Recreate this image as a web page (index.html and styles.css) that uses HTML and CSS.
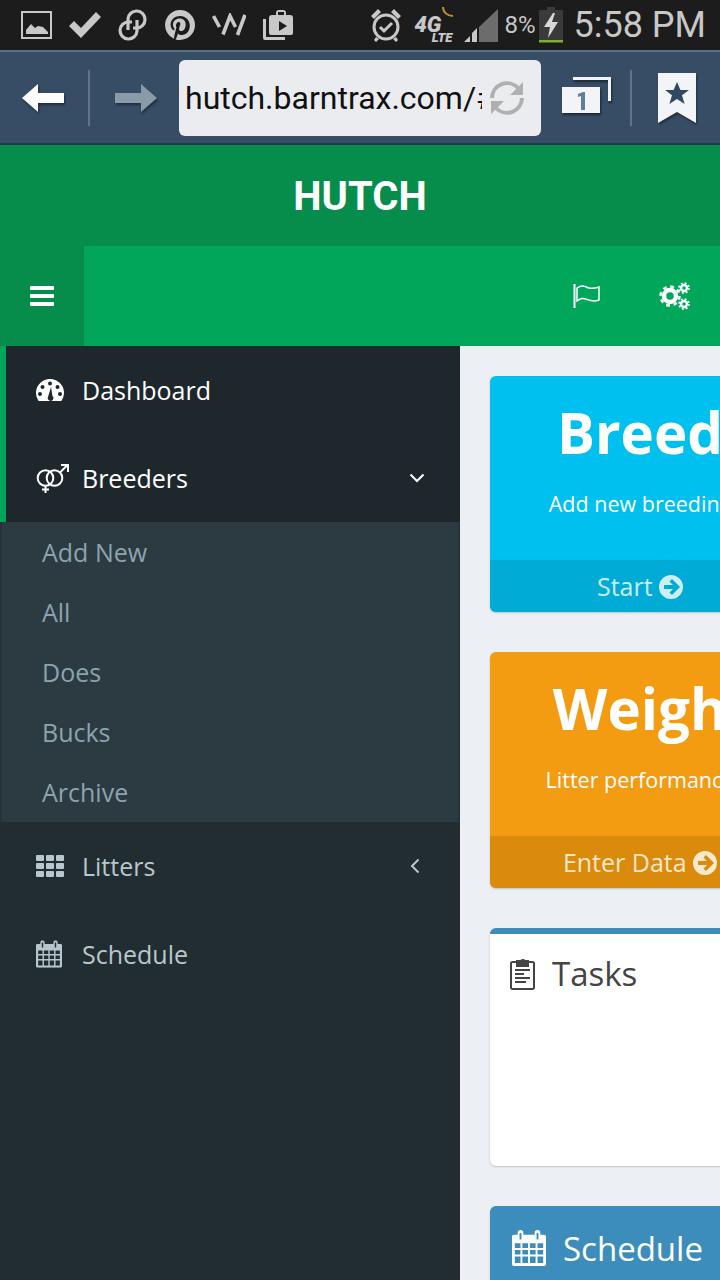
FILE: index.html
```html
<!DOCTYPE html>
<html lang="en">
<head>
    <meta charset="UTF-8">
    <meta name="viewport" content="width=device-width, initial-scale=1.0">
    <title>Hutch</title>
    <link rel="stylesheet" href="styles.css">
</head>
<body>
    <div class="status-bar">
        <div class="status-left">
            <svg class="st-icon" width="31" height="28" viewBox="0 0 31 28"><path d="M0 0h31v28H0zM2 2v24h27V2z" fill-rule="evenodd"/><path d="M5 23v-4l5-6 4 4 3-2 5 1 5 5v2z"/></svg>
            <svg class="st-icon" width="32" height="26" viewBox="0 0 32 26"><path d="M0 14l5-5 7 7L27 0l5 5-20 21z"/></svg>
            <svg class="st-icon" width="30" height="32" viewBox="0 0 30 32"><g fill="none" stroke="#c8c8c8" stroke-width="3.200"><path d="M10 21V10a8.500 8.500 0 1 1 8.500 9H15"/><path d="M19 11v11a8.500 8.500 0 1 1-8.500-9H14"/></g></svg>
            <svg class="st-icon" width="30" height="30" viewBox="0 0 30 30"><path d="M15 0a15 15 0 1 1 0 30 15 15 0 0 1-4.300-.6c1-1.700 1.700-3.600 2.200-5.800 1 1 2.400 1.500 3.900 1.500 4.700 0 8-4.200 8-9.300C24.800 10.400 20.700 6 15.200 6 9 6 5.600 10.200 5.600 14.800c0 2.300 1.200 4.700 3 5.500.6.200.7-.8.900-1.600-1-1.500-1.500-2.500-1.500-4 0-3.700 2.900-6.100 6.700-6.100 3.500 0 6 2.300 6 5.900 0 3.800-1.900 6.500-4.500 6.500-1.500 0-2.400-1.200-2.100-2.600.4-1.700 1.200-3.500 1.200-4.700 0-2.800-4.300-2.400-4.300 1.800 0 1 .4 1.900.4 1.900L9.500 25c-.4 1.200-.4 2.500-.3 3.800A15 15 0 0 1 15 0z" fill-rule="evenodd"/></svg>
            <svg class="st-icon icon-w" width="34" height="24" viewBox="0 0 34 24"><path d="M1.500 3l6 11M11 21.500L18 3l5.500 11M25.500 22L33 2" fill="none" stroke="#c8c8c8" stroke-width="3.600"/></svg>
            <svg class="st-icon" width="30" height="30" viewBox="0 0 30 30"><path d="M0 9h3v18h19v3H2a2 2 0 0 1-2-2z"/><path d="M13 5V3a3 3 0 0 1 3-3h4a3 3 0 0 1 3 3v2h4a3 3 0 0 1 3 3v15a2 2 0 0 1-2 2H8a2 2 0 0 1-2-2V8a3 3 0 0 1 3-3zm2 0h6V2h-6zm1 6v10l8-5z" fill-rule="evenodd"/></svg>
        </div>
        <div class="status-right">
            <svg class="st-icon" width="32" height="34" viewBox="0 0 32 34"><circle cx="16" cy="19" r="12" fill="none" stroke="#c8c8c8" stroke-width="3"/><path d="M10 19l4 4 8-8" fill="none" stroke="#c8c8c8" stroke-width="3"/><path d="M1 8l7-7 3 3-7 7zM31 8l-7-7-3 3 7 7zM6 29l3 2-3 3-2-2zM26 29l-3 2 3 3 2-2z"/></svg>
            <div class="net-badge">
                <svg class="net-arc" width="12" height="11" viewBox="0 0 12 11"><path d="M1 0c0 5 4 9 10 9" fill="none" stroke="#c98a2c" stroke-width="2"/></svg>
                <span class="net-4g">4G</span>
                <span class="net-lte">LTE</span>
            </div>
            <svg class="signal" width="34" height="33" viewBox="0 0 34 33"><path d="M15 33V18L34 0v33z" fill="#6c6c6c"/><path d="M0 33l6-6v6zM8 33v-9l5-5v14z" fill="#c8c8c8"/></svg>
            <span class="batt-pct">8%</span>
            <svg class="battery" width="24" height="36" viewBox="0 0 24 36"><path d="M0 3h8V0h8v3h8v30H0z" fill="#3a3a3a"/><path d="M14 6L5 20h6l-2 11 10-16h-6l3-9z" fill="#d8d8d8"/><path d="M0 33h24v2.500H0z" fill="#7fb02a"/></svg>
            <span class="clock">5:58 PM</span>
        </div>
    </div>

    <div class="browser-bar">
        <svg class="arrow arrow-back" width="42" height="28" viewBox="0 0 42 28"><path d="M0 14L16 0v9h26v10H16v9z"/></svg>
        <div class="bar-divider"></div>
        <svg class="arrow arrow-fwd" width="42" height="28" viewBox="0 0 42 28"><path d="M42 14L26 0v9H0v10h26v9z"/></svg>
        <div class="url-box">
            <span class="url-text">hutch.barntrax.com/#/</span>
            <svg class="reload" width="36" height="36" viewBox="0 0 36 36"><g fill="none" stroke="#b0b0b0" stroke-width="4"><path d="M3 18A15 15 0 0 1 29 8"/><path d="M33 18A15 15 0 0 1 7 28"/></g><path d="M34 2v13H21zM2 34V21h13z" fill="#b0b0b0"/></svg>
        </div>
        <svg class="tabs" width="52" height="44" viewBox="0 0 52 44"><path d="M13 1h38v24h-3V4H13z" fill="#f2f4f7"/><rect x="2" y="11" width="38" height="26" fill="#f2f4f7"/><path d="M18 18l5-2h2v18h-4V20l-3 1z" fill="#5f7f9c"/></svg>
        <div class="bar-divider divider-right"></div>
        <svg class="bookmark" width="38" height="50" viewBox="0 0 38 50"><path d="M0 0h38v50L19 39 0 50z" fill="#f2f4f7"/><path d="M19 9l3.400 8h8.600l-7 5.300 2.600 8.700-7.600-5-7.600 5 2.600-8.700-7-5.300h8.600z" fill="#2f4963"/></svg>
    </div>

    <header class="app-logo">HUTCH</header>

    <nav class="app-nav">
        <div class="nav-toggle">
            <div class="burger"><span></span><span></span><span></span></div>
        </div>
        <div class="nav-menu">
            <svg class="flag" width="28" height="26" viewBox="0 0 28 26"><path d="M1.500 1v24" stroke="#fff" stroke-width="2"/><path d="M4 5c6-4 8-1 12 0s7 0 10-1v13c-5 2-8 1-12-.5S8 15 4 18z" fill="none" stroke="#fff" stroke-width="1.500"/></svg>
            <svg class="gears" width="31" height="28" viewBox="0 0 31 28">
                <g fill="none" stroke="#fff">
                    <circle cx="11" cy="14" r="6" stroke-width="4.500"/>
                    <circle cx="11" cy="14" r="9.500" stroke-width="2.500" stroke-dasharray="3.700 3.760"/>
                    <circle cx="25" cy="6" r="3" stroke-width="2.400"/>
                    <circle cx="25" cy="6" r="5" stroke-width="1.600" stroke-dasharray="2 1.930"/>
                    <circle cx="25" cy="22" r="3" stroke-width="2.400"/>
                    <circle cx="25" cy="22" r="5" stroke-width="1.600" stroke-dasharray="2 1.930"/>
                </g>
            </svg>
        </div>
    </nav>

    <div class="wrapper">
        <aside class="sidebar">
            <ul class="side-menu">
                <li class="side-item active">
                    <svg class="side-icon" width="28" height="22" viewBox="0 0 28 22"><path d="M2.600 22a14 14 0 1 1 22.800 0z" fill="#fff"/><g fill="#1e282c"><circle cx="14" cy="4.500" r="2"/><circle cx="6.500" cy="8" r="2"/><circle cx="21.500" cy="8" r="2"/><circle cx="4" cy="15" r="2"/><circle cx="24" cy="15" r="2"/><path d="M15 8l1.500 9a2.800 2.800 0 1 1-4.500 1z"/></g></svg>
                    <span class="side-label">Dashboard</span>
                </li>
                <li class="side-item active">
                    <svg class="side-icon" width="33" height="30" viewBox="0 0 33 30"><g fill="none" stroke="#fff" stroke-width="2"><circle cx="9.500" cy="15" r="7.800"/><circle cx="18.500" cy="15" r="7.800"/><path d="M24 9.500L31 2.500M25 2h7v7M9.500 23v7M6 26.500h7"/></g></svg>
                    <span class="side-label">Breeders</span>
                    <svg class="chev" width="16" height="10" viewBox="0 0 16 10"><path d="M1.500 1.500L8 8l6.500-6.500" fill="none" stroke="#fff" stroke-width="2"/></svg>
                </li>
                <ul class="sub-menu">
                    <li>Add New</li>
                    <li>All</li>
                    <li>Does</li>
                    <li>Bucks</li>
                    <li>Archive</li>
                </ul>
                <li class="side-item">
                    <svg class="side-icon" width="28" height="22" viewBox="0 0 28 22"><g fill="#b8c7ce"><rect width="8" height="6" rx="1"/><rect x="10" width="8" height="6" rx="1"/><rect x="20" width="8" height="6" rx="1"/><rect y="8" width="8" height="6" rx="1"/><rect x="10" y="8" width="8" height="6" rx="1"/><rect x="20" y="8" width="8" height="6" rx="1"/><rect y="16" width="8" height="6" rx="1"/><rect x="10" y="16" width="8" height="6" rx="1"/><rect x="20" y="16" width="8" height="6" rx="1"/></g></svg>
                    <span class="side-label">Litters</span>
                    <svg class="chev chev-left" width="10" height="16" viewBox="0 0 10 16"><path d="M8.500 1.500L2 8l6.500 6.500" fill="none" stroke="#b8c7ce" stroke-width="2"/></svg>
                </li>
                <li class="side-item">
                    <svg class="side-icon" width="26" height="28" viewBox="0 0 36 38"><use href="#cal"/></svg>
                    <span class="side-label">Schedule</span>
                </li>
            </ul>
        </aside>

        <main class="content">
            <section class="tile tile-blue">
                <div class="tile-body">
                    <h3>Breed</h3>
                    <p>Add new breeding</p>
                </div>
                <div class="tile-foot">Start <svg class="go" width="24" height="24" viewBox="0 0 24 24"><use href="#go"/></svg></div>
            </section>
            <section class="tile tile-orange">
                <div class="tile-body">
                    <h3>Weigh</h3>
                    <p>Litter performance</p>
                </div>
                <div class="tile-foot">Enter Data <svg class="go" width="24" height="24" viewBox="0 0 24 24"><use href="#go"/></svg></div>
            </section>
            <section class="box">
                <div class="box-head">
                    <svg class="box-icon" width="25" height="32" viewBox="0 0 25 32"><path d="M8 4h2.500a2.500 2.500 0 0 1 4.500-1V4h2M8 4H2.500A1.500 1.500 0 0 0 1 5.500v24A1.500 1.500 0 0 0 2.500 31h20a1.500 1.500 0 0 0 1.500-1.500v-24A1.500 1.500 0 0 0 22.500 4H17" fill="none" stroke="#444" stroke-width="2"/><path d="M7 3h11v5H7zM5 12h15M5 16h9M5 20h15M5 24h11" fill="#444" stroke="#444" stroke-width="2"/></svg>
                    <span>Tasks</span>
                </div>
            </section>
            <section class="box-solid">
                <svg class="box-icon" width="34" height="36" viewBox="0 0 36 38"><use href="#cal"/></svg>
                <span>Schedule</span>
            </section>
        </main>
    </div>

    <svg class="defs" width="0" height="0">
        <symbol id="cal" viewBox="0 0 36 38">
            <path fill="currentColor" fill-rule="evenodd" d="M6 3a3 3 0 0 1 6 0v2h12V3a3 3 0 0 1 6 0v2h4a2 2 0 0 1 2 2v29a2 2 0 0 1-2 2H2a2 2 0 0 1-2-2V7a2 2 0 0 1 2-2h4zm2 0v7h2V3zm18 0v7h2V3zM3 14v5h6v-5zm8 0v5h6v-5zm8 0v5h6v-5zm8 0v5h6v-5zM3 21v5h6v-5zm8 0v5h6v-5zm8 0v5h6v-5zm8 0v5h6v-5zM3 28v7h6v-7zm8 0v7h6v-7zm8 0v7h6v-7zm8 0v7h6v-7z"/>
        </symbol>
        <symbol id="go" viewBox="0 0 24 24">
            <path fill="currentColor" fill-rule="evenodd" d="M12 0a12 12 0 1 1 0 24 12 12 0 0 1 0-24zm1 4l-2.500 2.500 3.500 3.500H5v4h9l-3.500 3.500L13 20l8-8z"/>
        </symbol>
    </svg>
</body>
</html>
```

FILE: styles.css
```css
* {
    box-sizing: border-box;
}
html, body {
    margin: 0;
    height: 1280px;
    overflow: hidden;
}
body {
    display: flex;
    flex-direction: column;
    width: 720px;
    font-family: "Open Sans", sans-serif;
    background-color: #ecf0f5;
}
ul {
    list-style: none;
    margin: 0;
    padding: 0;
}
.defs {
    position: absolute;
}

/* phone status bar */
.status-bar {
    display: flex;
    justify-content: space-between;
    align-items: center;
    height: 50px;
    padding: 0 14px 0 21px;
    background-color: #1c1c1c;
    color: #c8c8c8;
    font-family: Roboto, sans-serif;
}
.st-icon {
    fill: #c8c8c8;
    flex: none;
}
.status-left {
    display: flex;
    align-items: center;
    gap: 17px;
}
.status-right {
    display: flex;
    align-items: center;
}
.net-badge {
    position: relative;
    width: 40px;
    height: 36px;
    margin: 0 10px 0 12px;
    font-style: italic;
    font-weight: 900;
}
.net-arc {
    position: absolute;
    top: 0;
    right: 0;
}
.net-4g {
    position: absolute;
    left: 0;
    top: 9px;
    font-size: 22px;
    line-height: 17px;
}
.net-lte {
    position: absolute;
    right: 2px;
    bottom: 0;
    font-size: 13px;
    line-height: 10px;
}
.batt-pct {
    margin: 0 3px 0 6px;
    font-size: 24px;
    line-height: 30px;
}
.clock {
    margin-left: 11px;
    font-size: 36px;
    line-height: 40px;
}

/* browser chrome */
.browser-bar {
    display: flex;
    align-items: center;
    height: 95px;
    padding-left: 22px;
    background-color: #364d65;
    border-top: 2px solid #56708a;
    border-bottom: 2px solid #263748;
}
.arrow {
    flex: none;
    filter: drop-shadow(1px 2px 1px rgba(0,0,0,0.4));
}
.arrow-back {
    fill: #fff;
}
.arrow-fwd {
    fill: #8a9aa9;
    margin-left: 25px;
}
.bar-divider {
    flex: none;
    width: 2px;
    height: 56px;
    margin-left: 24px;
    background-color: #5f7488;
}
.url-box {
    flex: none;
    display: flex;
    align-items: center;
    width: 362px;
    height: 76px;
    margin-left: 22px;
    padding-left: 6px;
    background-color: #ebecf0;
    border-radius: 6px;
}
.url-text {
    flex: none;
    width: 297px;
    overflow: hidden;
    white-space: nowrap;
    color: #111;
    font-family: Roboto, sans-serif;
    font-size: 32px;
}
.reload {
    flex: none;
    margin-left: 7px;
}
.tabs {
    flex: none;
    margin-left: 19px;
    filter: drop-shadow(1px 2px 1px rgba(0,0,0,0.5));
}
.divider-right {
    margin-left: 18px;
}
.bookmark {
    flex: none;
    margin-left: 26px;
    filter: drop-shadow(1px 2px 1px rgba(0,0,0,0.4));
}

/* app header */
.app-logo {
    height: 101px;
    padding-top: 27px;
    text-align: center;
    color: #fff;
    font-family: Roboto, sans-serif;
    font-size: 40px;
    font-weight: 700;
    line-height: 50px;
    background-color: #068d4c;
}
.app-nav {
    display: flex;
    height: 100px;
}
.nav-toggle {
    display: flex;
    justify-content: center;
    align-items: center;
    width: 84px;
    background: #068d4c;
}
.burger {
    display: flex;
    flex-direction: column;
    gap: 4px;
}
.burger span {
    display: block;
    width: 24px;
    height: 4px;
    background-color: #fff;
    border-radius: 1px;
}
.nav-menu {
    flex: 1;
    display: flex;
    justify-content: flex-end;
    align-items: center;
    gap: 58px;
    padding-right: 30px;
    background-color: #00a65a;
}

/* sidebar */
.wrapper {
    flex: 1;
    display: flex;
    min-height: 0;
}
.sidebar {
    flex: none;
    width: 460px;
    background-color: #222d32;
}
.side-item {
    display: flex;
    align-items: center;
    height: 88px;
    padding-left: 36px;
    color: #b8c7ce;
    font-size: 25px;
    position: relative;
}
.side-item.active {
    color: #fff;
    background-color: #1e282c;
    border-left: 6px solid #00a65a;
    padding-left: 30px;
}
.side-icon {
    flex: none;
    color: #b8c7ce;
}
.side-label {
    position: absolute;
    left: 82px;
}
.active .side-label {
    left: 76px;
}
.chev {
    position: absolute;
    right: 35px;
}
.chev-left {
    right: 40px;
}
.sub-menu {
    background-color: #2c3b41;
    border-left: 2px solid #263339;
    border-right: 2px solid #263339;
}
.sub-menu li {
    height: 60px;
    padding-left: 40px;
    color: #8aa4af;
    font-size: 25px;
    line-height: 60px;
}

/* content */
.content {
    flex: none;
    width: 260px;
    padding: 30px 0 0 30px;
}
.tile, .box, .box-solid {
    width: 300px;
    border-radius: 6px;
    box-shadow: 0 1px 2px rgba(0,0,0,0.2);
}
.tile {
    height: 236px;
    margin-bottom: 40px;
    color: #fff;
    text-align: center;
    overflow: hidden;
}
.tile-body {
    height: 184px;
}
.tile-body h3 {
    margin: 0;
    padding-top: 19px;
    font-size: 56.500px;
    font-weight: 700;
    line-height: 76px;
}
.tile-body p {
    margin: 18px 0 0;
    font-size: 21.500px;
    line-height: 30px;
    white-space: nowrap;
}
.tile-foot {
    height: 52px;
    color: rgba(255,255,255,0.8);
    font-size: 25px;
    line-height: 52px;
    white-space: nowrap;
}
.go {
    vertical-align: -3px;
}
.tile-blue {
    background-color: #00c0ef;
}
.tile-blue .tile-foot {
    background-color: #00acd6;
}
.tile-orange {
    background-color: #f39c12;
}
.tile-orange .tile-foot {
    background-color: #db8b0b;
}
.box {
    height: 238px;
    margin-bottom: 40px;
    background-color: #fff;
    border-top: 6px solid #3c8dbc;
}
.box-head {
    display: flex;
    align-items: center;
    gap: 17px;
    padding: 20px 0 0 20px;
    color: #444;
    font-size: 33px;
    line-height: 40px;
}
.box-solid {
    display: flex;
    align-items: center;
    gap: 17px;
    height: 84px;
    padding-left: 22px;
    color: #fff;
    background-color: #3c8dbc;
    font-size: 33px;
    white-space: nowrap;
}
```
